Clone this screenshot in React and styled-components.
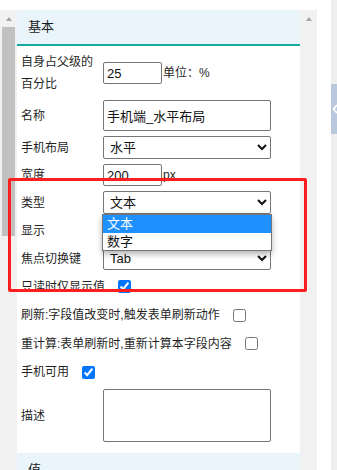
import React from 'react';
import styled, { createGlobalStyle } from 'styled-components';

const GlobalStyle = createGlobalStyle`
  html, body {
    margin: 0;
    padding: 0;
    background: #fff;
    overflow: hidden;
  }
  body {
    font-family: "Liberation Sans", "Noto Sans CJK SC", sans-serif;
    font-size: 12px;
    color: #1f1f1f;
  }
`;

function App() {
  return (
    <Page>
      <GlobalStyle />
      <Frame>
        <Track>
          <Arrow />
          <Thumb />
        </Track>
        <Panel>
          <SectionHeader>基本</SectionHeader>
          <Form>
            <Row>
              <Label>自身占父级的百分比</Label>
              <Value>
                <Input defaultValue="25" />
                <Unit>单位：%</Unit>
              </Value>
            </Row>
            <Row>
              <Label>名称</Label>
              <Value>
                <Input wide tall defaultValue="手机端_水平布局" />
              </Value>
            </Row>
            <Row>
              <Label>手机布局</Label>
              <Value>
                <Select defaultValue="水平">
                  <option>水平</option>
                  <option>垂直</option>
                </Select>
              </Value>
            </Row>
            <Row>
              <Label>宽度</Label>
              <Value>
                <Input defaultValue="200" />
                <Unit>px</Unit>
              </Value>
            </Row>
            <Row>
              <Label>类型</Label>
              <Value>
                <Select defaultValue="文本">
                  <option>文本</option>
                  <option>数字</option>
                </Select>
                <Dropdown>
                  <Option active>文本</Option>
                  <Option>数字</Option>
                </Dropdown>
              </Value>
            </Row>
            <Row>
              <Label>显示</Label>
              <Value>
                <Select defaultValue="是">
                  <option>是</option>
                </Select>
              </Value>
            </Row>
            <Row>
              <Label>焦点切换键</Label>
              <Value>
                <Select defaultValue="Tab">
                  <option>Tab</option>
                  <option>Enter</option>
                </Select>
              </Value>
            </Row>
            <CheckRow>
              只读时仅显示值
              <Check type="checkbox" defaultChecked />
            </CheckRow>
            <CheckRow>
              刷新:字段值改变时,触发表单刷新动作
              <Check type="checkbox" />
            </CheckRow>
            <CheckRow>
              重计算:表单刷新时,重新计算本字段内容
              <Check type="checkbox" />
            </CheckRow>
            <CheckRow>
              手机可用
              <Check type="checkbox" defaultChecked />
            </CheckRow>
            <Row>
              <Label>描述</Label>
              <Value>
                <TextArea />
              </Value>
            </Row>
          </Form>
          <SectionHeader plain>值</SectionHeader>
        </Panel>
        <Track>
          <Arrow />
        </Track>
      </Frame>
      <SideStrip>
        <SideTab>
          <svg width="6" height="10" viewBox="0 0 6 10">
            <path d="M5 1 L1.5 5 L5 9" fill="none" stroke="#fff" strokeWidth="1.8" />
          </svg>
        </SideTab>
      </SideStrip>
      <Highlight />
    </Page>
  );
}

const Page = styled.div`
  position: relative;
  display: flex;
  width: 337px;
  height: 470px;
  overflow: hidden;
`;

const Frame = styled.div`
  display: flex;
  padding-top: 10px;
  margin-right: 14px;
`;

const Track = styled.div`
  display: flex;
  flex-direction: column;
  align-items: center;
  width: 17px;
  background: #f1f1f1;
`;

const Arrow = styled.div`
  width: 0;
  height: 0;
  margin-top: 7px;
  border-left: 3.5px solid transparent;
  border-right: 3.5px solid transparent;
  border-bottom: 4px solid #a3a3a3;
`;

const Thumb = styled.div`
  width: 13px;
  height: 209px;
  margin-top: 6px;
  background: #c1c1c1;
`;

const Panel = styled.div`
  width: 283px;
  background: #fff;
`;

const SectionHeader = styled.div`
  height: 34px;
  padding-left: 11px;
  line-height: 34px;
  font-size: 13px;
  color: #1a1a1a;
  background: #e9f5fb;
  border-bottom: 2px solid ${({ plain }) => (plain ? '#e9f5fb' : '#17a89e')};
`;

const Form = styled.div`
  padding: 2.5px 29px 8.5px 4px;
`;

const Row = styled.div`
  display: grid;
  grid-template-columns: 82px 168px;
  align-items: center;
  padding: 2.5px 0;
`;

const Label = styled.div`
  line-height: 22px;
  padding-right: 8px;
`;

const Value = styled.div`
  position: relative;
  display: flex;
  align-items: center;
`;

const Input = styled.input`
  box-sizing: border-box;
  width: ${({ wide }) => (wide ? '168px' : '59px')};
  height: ${({ tall }) => (tall ? '31px' : '22px')};
  padding: 0 3px;
  border: 1px solid #767676;
  border-radius: 2px;
  font-family: "Liberation Sans", "Noto Sans CJK SC", sans-serif;
  font-size: 13px;
  color: #111;
  outline: none;
`;

const Unit = styled.span`
  margin-left: 1px;
  line-height: 22px;
`;

const Select = styled.select`
  box-sizing: border-box;
  width: 168px;
  height: 23px;
  padding: 0 0 0 2px;
  border: 1px solid #767676;
  border-radius: 2px;
  background: #fff;
  font-family: "Liberation Sans", "Noto Sans CJK SC", sans-serif;
  font-size: 13px;
  color: #111;
`;

const Dropdown = styled.div`
  position: absolute;
  top: 23px;
  left: -1px;
  z-index: 5;
  width: 170px;
  box-sizing: border-box;
  border: 1px solid #767676;
  background: #fff;
  box-shadow: 0 3px 6px rgba(0, 0, 0, 0.3);
`;

const Option = styled.div`
  height: 17.5px;
  padding-left: 4px;
  line-height: 17.5px;
  font-size: 13px;
  color: ${({ active }) => (active ? '#fff' : '#111')};
  background: ${({ active }) => (active ? '#1e90ff' : '#fff')};
`;

const CheckRow = styled.div`
  display: flex;
  align-items: center;
  height: 28.5px;
  line-height: 22px;
`;

const Check = styled.input`
  width: 13px;
  height: 13px;
  margin: 0 0 0 13px;
`;

const TextArea = styled.textarea`
  box-sizing: border-box;
  width: 168px;
  height: 53px;
  border: 1px solid #767676;
  border-radius: 2px;
  resize: none;
`;

const SideStrip = styled.div`
  width: 6px;
  height: 470px;
  background: #efefef;
  overflow: hidden;
`;

const SideTab = styled.div`
  display: flex;
  align-items: center;
  width: 14px;
  height: 50px;
  margin-top: 84px;
  padding-left: 1px;
  background: #b9c8dc;
`;

const Highlight = styled.div`
  position: absolute;
  left: 8px;
  top: 178px;
  z-index: 10;
  box-sizing: border-box;
  width: 299px;
  height: 114px;
  border: 3.5px solid #ff1e1e;
  border-radius: 2px;
  pointer-events: none;
`;

export default App;
